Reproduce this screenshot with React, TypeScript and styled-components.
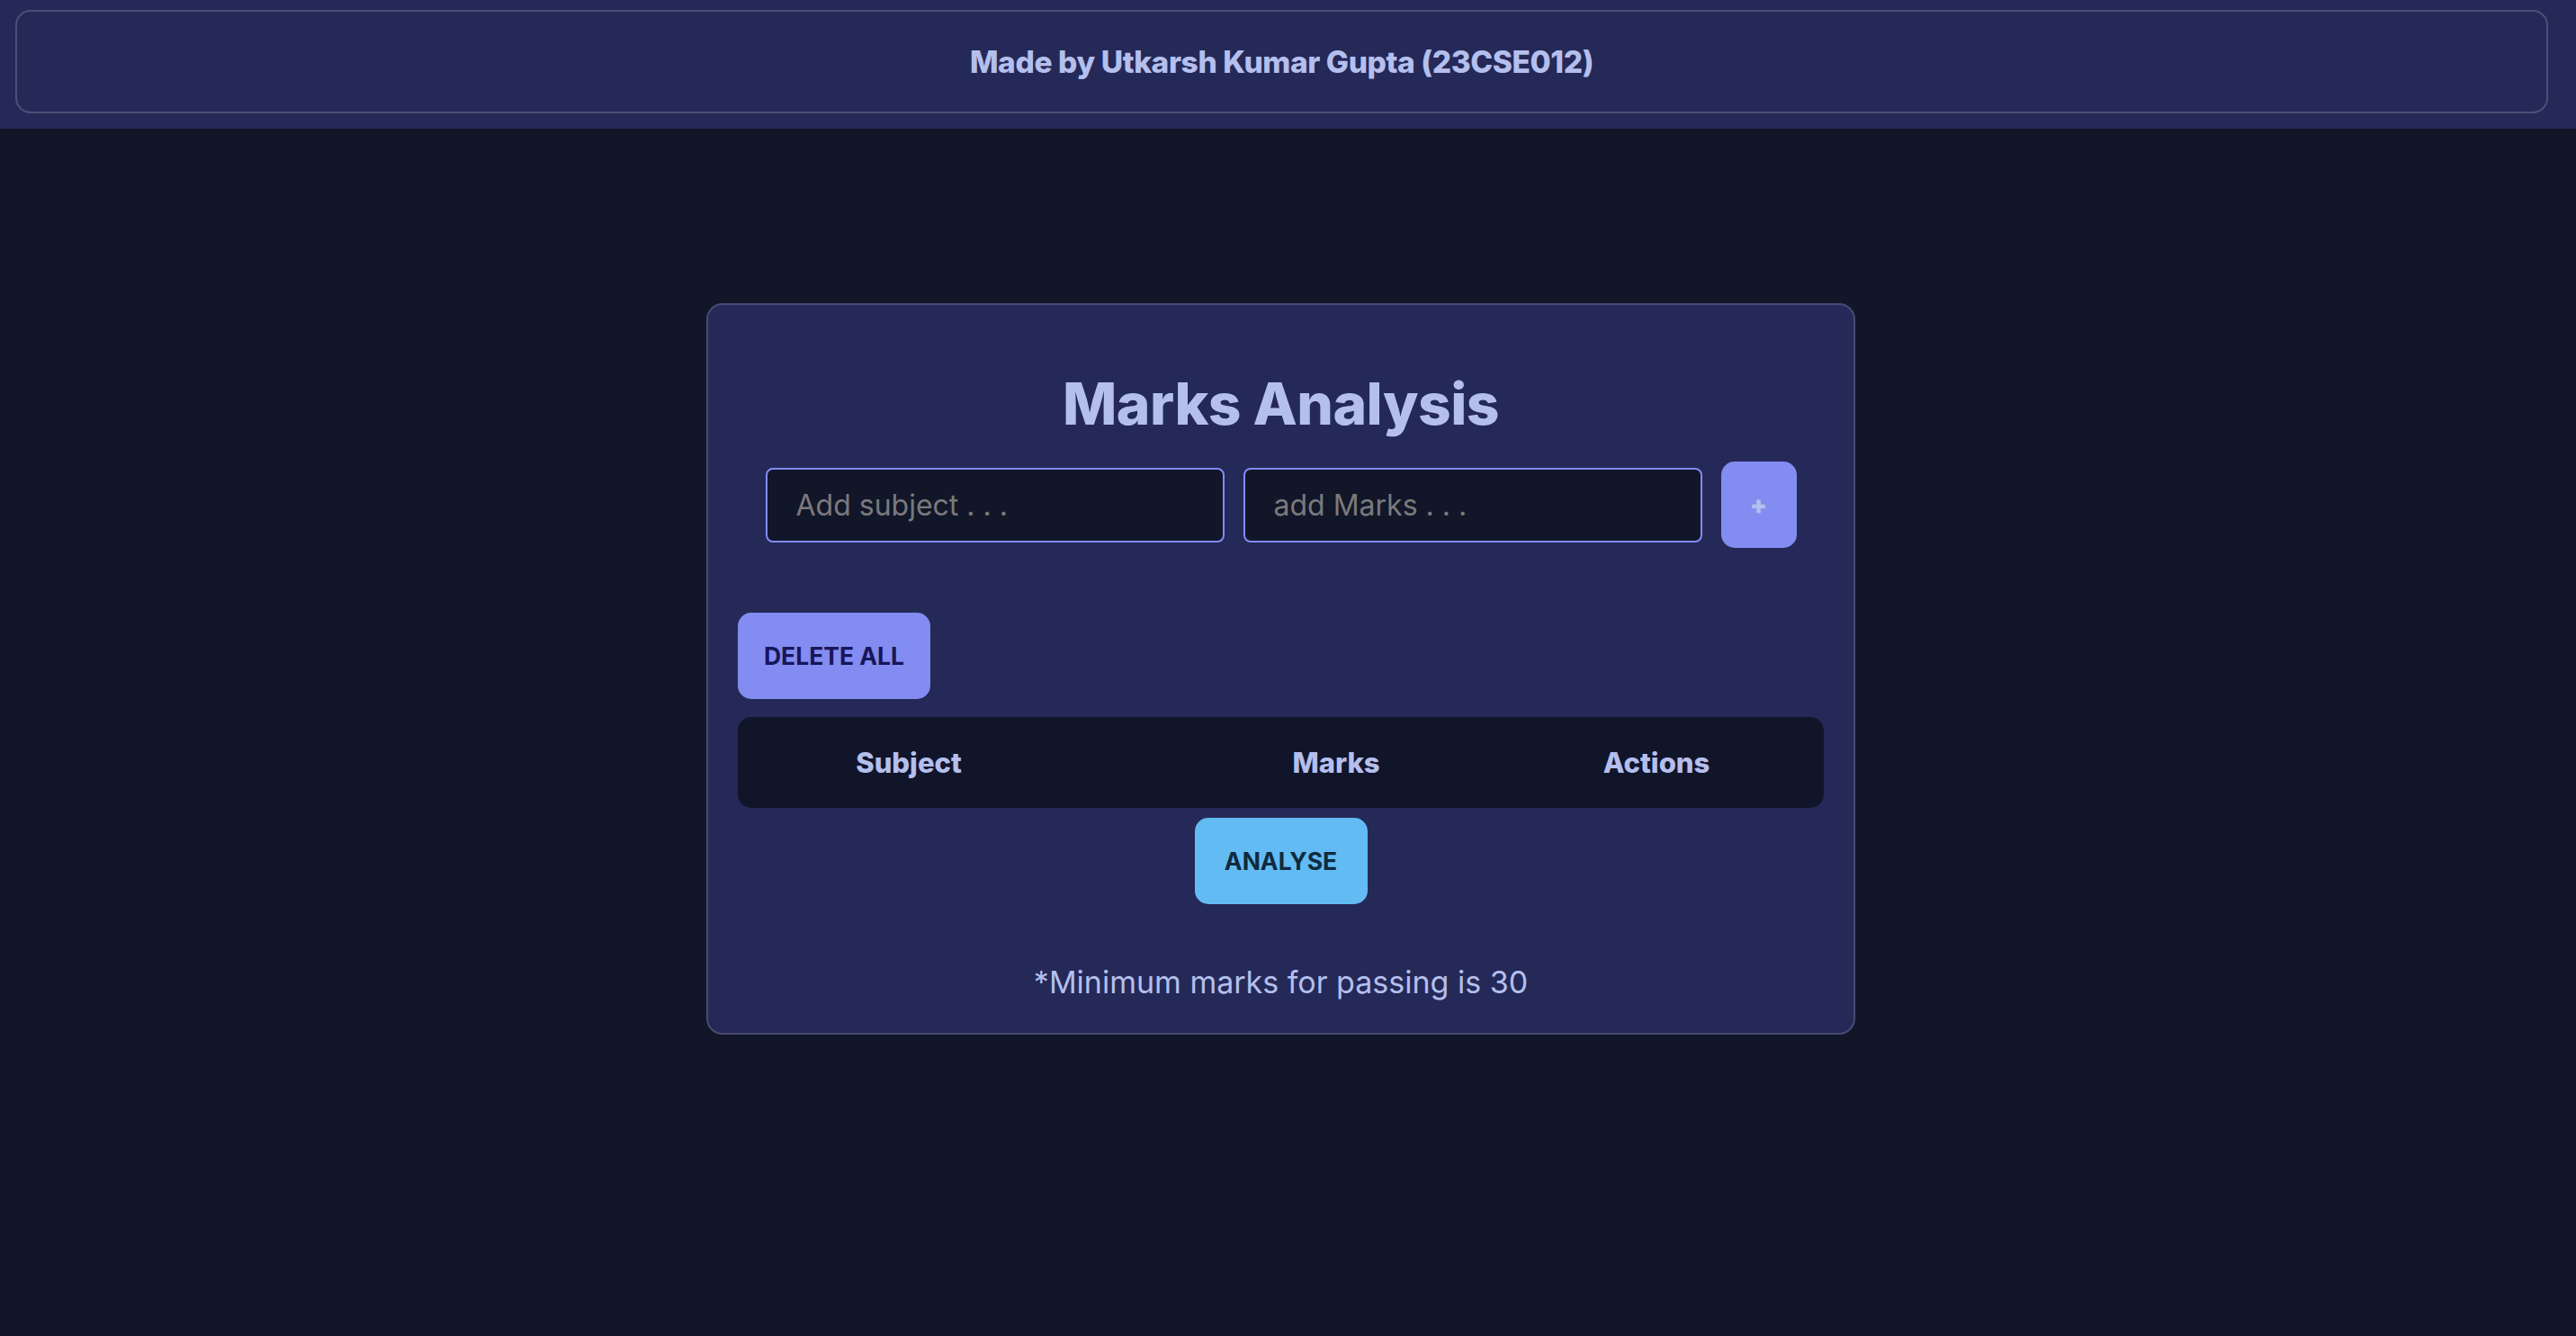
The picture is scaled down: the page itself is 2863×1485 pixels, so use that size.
import React from "react";
import styled, { createGlobalStyle, css } from "styled-components";

const GlobalStyle = createGlobalStyle`
  html, body {
    margin: 0;
    padding: 0;
    background: #121629;
  }
  body {
    font-family: Inter, "Noto Sans", "Liberation Sans", sans-serif;
    color: #b4bfed;
  }
  * { box-sizing: border-box; }
`;

const Page = styled.div`
  min-height: 100vh;
  background: #121629;
`;

const HeaderBar = styled.header`
  background: #252957;
  padding: 11px 31px 17px 17px;
`;

const HeaderBox = styled.div`
  height: 115px;
  border: 2px solid rgba(255, 255, 255, 0.18);
  border-radius: 17px;
  display: flex;
  align-items: center;
  justify-content: center;
  font-size: 33.5px;
  font-weight: 800;
  letter-spacing: -0.4px;
  color: #b4bfed;
`;

const Main = styled.main`
  display: flex;
  justify-content: center;
  padding: 194px 16px 0 0;
`;

const Card = styled.section`
  width: 1277px;
  background: #252957;
  border: 2px solid rgba(255, 255, 255, 0.16);
  border-radius: 18px;
  padding: 33px 33px 31px;
  display: flex;
  flex-direction: column;
`;

const Title = styled.h1`
  margin: 45px 0 0;
  text-align: center;
  font-size: 64px;
  line-height: 64px;
  font-weight: 800;
  letter-spacing: -0.5px;
  color: #b4bfed;
`;

const InputRow = styled.div`
  margin-top: 32px;
  display: flex;
  justify-content: center;
  align-items: center;
  gap: 21px;
`;

const TextInput = styled.input`
  width: 510px;
  height: 83px;
  border: 2px solid #818cf8;
  border-radius: 8px;
  background: #121629;
  padding: 0 32px;
  font-family: inherit;
  font-size: 32px;
  color: #b4bfed;
  outline: none;
  &::placeholder {
    color: #7a7a7c;
  }
`;

const AddButton = styled.button`
  width: 84px;
  height: 96px;
  border: none;
  border-radius: 15px;
  background: #838cf1;
  color: #b4bfed;
  font-family: inherit;
  font-size: 28px;
  font-weight: 900;
  display: flex;
  align-items: center;
  justify-content: center;
  padding: 0;
`;

const ActionBar = styled.div`
  margin-top: 72px;
  display: flex;
  justify-content: flex-start;
`;

const Button = styled.button<{ $variant: "indigo" | "sky"; $width: number }>`
  width: ${(p) => p.$width}px;
  height: 96px;
  border: none;
  border-radius: 15px;
  font-family: inherit;
  font-size: 26.5px;
  font-weight: 700;
  display: flex;
  align-items: center;
  justify-content: center;
  padding: 0;
  ${(p) =>
    p.$variant === "indigo"
      ? css`
          background: #838cf1;
          color: #17165a;
        `
      : css`
          background: #63bbf3;
          color: #0f2a40;
        `}
`;

const TableHead = styled.div`
  margin-top: 20px;
  height: 101px;
  border-radius: 15px;
  background: #11152a;
  display: grid;
  grid-template-columns: 380px 570px 142px 1fr;
  align-items: center;
`;

const HeadCell = styled.div`
  text-align: center;
  font-size: 31px;
  font-weight: 800;
  color: #b4bfed;
  white-space: nowrap;
`;

const AnalyseBar = styled.div`
  margin-top: 11px;
  display: flex;
  justify-content: center;
`;

const Note = styled.p`
  margin: 61px 0 0;
  text-align: center;
  font-size: 34px;
  line-height: 51px;
  font-weight: 400;
  color: #b4bfed;
`;

export default function App() {
  return (
    <Page>
      <GlobalStyle />
      <HeaderBar>
        <HeaderBox>Made by Utkarsh Kumar Gupta (23CSE012)</HeaderBox>
      </HeaderBar>
      <Main>
        <Card>
          <Title>Marks Analysis</Title>
          <InputRow>
            <TextInput placeholder="Add subject . . ." />
            <TextInput placeholder="add Marks . . ." />
            <AddButton>+</AddButton>
          </InputRow>
          <ActionBar>
            <Button $variant="indigo" $width={214}>
              DELETE ALL
            </Button>
          </ActionBar>
          <TableHead>
            <HeadCell>Subject</HeadCell>
            <HeadCell>Marks</HeadCell>
            <HeadCell>Actions</HeadCell>
          </TableHead>
          <AnalyseBar>
            <Button $variant="sky" $width={192}>
              ANALYSE
            </Button>
          </AnalyseBar>
          <Note>*Minimum marks for passing is 30</Note>
        </Card>
      </Main>
    </Page>
  );
}
